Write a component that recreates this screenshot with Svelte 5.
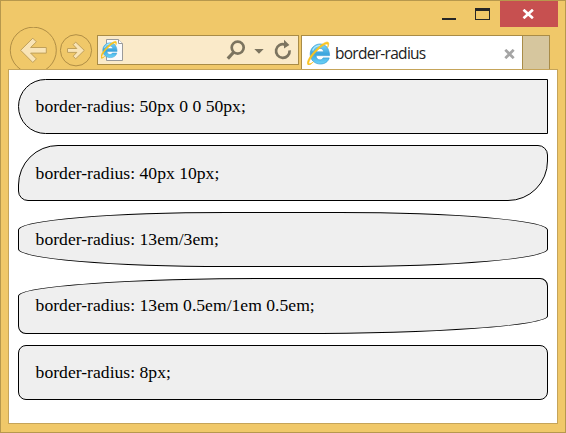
<script>
  const samples = [
    { text: '50px 0 0 50px', kind: 'left' },
    { text: '40px 10px', kind: 'diagonal' },
    { text: '13em/3em', kind: 'ellipse' },
    { text: '13em 0.5em/1em 0.5em', kind: 'mixed' },
    { text: '8px', kind: 'even' }
  ];
</script>

{#snippet explorer()}
  <g fill="none">
    <path d="M22.6 14.6C22.3 7.4 18.8 3 13.2 3C7.6 3 3.2 7.4 3.2 13C3.2 18.8 7.5 23 13.3 23C17.8 23 21.1 20.8 22.2 16.9H16.1C15.4 18.2 14.4 18.9 13 18.9C10.7 18.9 9.2 17.2 9 14.6Z" fill="url(#blue)" stroke="#3b9ed4" stroke-width=".7" />
    <path d="M9.1 10.8C9.5 8.6 10.9 7.4 13 7.4C15 7.4 16.3 8.6 16.6 10.8Z" fill="#fff" stroke="#3b9ed4" stroke-width=".6" />
    <path d="M5.6 9.6C7 6.2 9.4 4.7 13 4.5" stroke="#b7edff" stroke-width="1.2" />
    <path d="M5.2 15.6C2.2 19.4 1 22.6 2.4 22.8C3.4 22.9 5 22 6.4 20.8C3.6 24 1.2 24.8.6 23.2C-.4 20.6 2.6 15.3 7.6 10C12.6 4.7 17.6 1 20.2 1C22.3 1 22.2 3.6 20.6 6.6C21.3 4.2 21 3 19.5 3.1C16.5 3.3 9.6 9.7 5.2 15.6Z" fill="#fbc71e" stroke="#f6bd23" stroke-width=".6" />
  </g>
{/snippet}

<div class="window">
  <div class="titlebar">
    <svg class="controls" width="60" height="27" viewBox="0 0 60 27">
      <path d="M2 18h14v2H2z" fill="#262626" />
      <path d="M35 8h15v12H35zM36 11v8h13v-8z" fill="#262626" fill-rule="evenodd" />
    </svg>
    <div class="close">
      <svg width="12" height="10" viewBox="0 0 12 10"><path d="M1.5.7l9.4 8.6M10.9.7l-9.4 8.6" stroke="#fff" stroke-width="2.6" /></svg>
    </div>
  </div>

  <div class="toolbar">
    <svg class="history" width="88" height="42" viewBox="0 0 88 42">
      <g fill="none" stroke="#b08e45">
        <circle cx="25.3" cy="23.2" r="23" />
        <circle cx="68" cy="23.3" r="15.6" />
      </g>
      <path d="M12.6 23.3L24.8 11.2L28.4 14.8L22.6 20.5H38.3V26.1H22.6L28.4 31.9L24.8 35.5Z" fill="#f9e4b6" stroke="#c0a05a" />
      <path d="M59.5 21.5h9.3l-3.7-3.8l2.6-2.6L76.3 23.4L67.7 31.8l-2.6-2.6l3.7-3.8h-9.3z" fill="#f9e4b6" stroke="#c0a05a" />
    </svg>
    <div class="address">
      <svg class="page" width="23" height="24" viewBox="0 0 23 24">
        <defs>
          <linearGradient id="blue" x2="0" y2="1">
            <stop stop-color="#7fd6f6" /><stop offset=".5" stop-color="#3ba5de" /><stop offset="1" stop-color="#6bd3f8" />
          </linearGradient>
        </defs>
        <path d="M5.5 2.5h12l4 4v17h-16z" fill="#fafafa" stroke="#9a9a9a" />
        <path d="M17.5 2.5v4h4" fill="#fff" stroke="#999" />
        <g transform="translate(-.6 3.6) scale(.74)">{@render explorer()}</g>
      </svg>
      <svg class="tools" width="70" height="28" viewBox="0 0 70 28">
        <g fill="none" stroke="#7c745f">
          <circle cx="15.7" cy="11.6" r="6" stroke-width="2.7" />
          <path d="M11.6 16.2L5.8 22.6" stroke-width="3.2" />
          <path d="M67.6 14.4A6.8 6.8 0 1 1 63 8.6" stroke-width="2.7" />
        </g>
        <path d="M32.3 13h9.4l-4.7 4.7zM62 3.8v8.7l5.4-3.4z" fill="#7c745f" />
      </svg>
    </div>
    <div class="tab">
      <svg class="logo" width="24" height="24" viewBox="0 0 24 24">{@render explorer()}</svg>
      <span>border-radius</span>
      <svg class="dismiss" width="11" height="10" viewBox="0 0 11 10"><path d="M1.3.8l8.4 8.4M9.7.8L1.3 9.2" stroke="#a5a5a5" stroke-width="2.7" /></svg>
    </div>
    <div class="new-tab"></div>
  </div>

  <main>
    {#each samples as sample}
      <div class="sample {sample.kind}">border-radius: {sample.text};</div>
    {/each}
  </main>
</div>

<style>
  .window {
    box-sizing: border-box;
    width: 566px;
    height: 433px;
    padding: 0 7px 8px;
    border: 1px solid #b7984d;
    background: #f0c869;
    display: flex;
    flex-direction: column;
  }
  .titlebar {
    height: 26px;
    flex: none;
    display: flex;
    justify-content: flex-end;
  }
  .controls {
    margin: -1px 0 0;
  }
  .close {
    width: 58px;
    height: 26px;
    background: #c75050;
    display: flex;
    align-items: center;
    justify-content: center;
  }
  .close svg {
    margin-right: 2px;
  }
  .toolbar {
    height: 42px;
    flex: none;
    display: flex;
    align-items: flex-start;
  }
  .history {
    flex: none;
    margin-right: 1px;
  }
  .address {
    box-sizing: border-box;
    width: 202px;
    height: 30px;
    margin-top: 8px;
    border: 1px solid #a98c47;
    background: #faeac9;
    display: flex;
    justify-content: space-between;
  }
  .page {
    margin: 1px 0 0 3px;
  }
  .tools {
    margin-right: 6px;
  }
  .tab {
    box-sizing: border-box;
    width: 221px;
    height: 34px;
    margin: 8px 0 0 2px;
    border: 1px solid #a98c47;
    border-right: 0;
    border-bottom: 0;
    background: #fff;
    display: flex;
    align-items: center;
  }
  .logo {
    margin: 1px 4px 0 5px;
  }
  .tab span {
    font: 15.5px/22px "Open Sans", "Noto Sans", sans-serif;
    letter-spacing: -0.72px;
    color: #222;
    padding-top: 1px;
  }
  .dismiss {
    margin: 2px 7px 0 auto;
  }
  .new-tab {
    box-sizing: border-box;
    width: 28px;
    height: 34px;
    margin-top: 8px;
    border: 1px solid #a98c47;
    border-bottom: 0;
    background: #d6c69e;
  }
  main {
    box-sizing: border-box;
    flex: 1;
    border: 1px solid #c5a45a;
    background: #fff;
    padding: 9px;
    display: flex;
    flex-direction: column;
    gap: 11px;
  }
  .sample {
    box-sizing: border-box;
    flex: none;
    height: 55px;
    padding: 0 16.6px;
    border: 1px solid #000;
    background: #efefef;
    color: #000;
    font: 17.6px/53px "Liberation Serif", "Times New Roman", serif;
    letter-spacing: 0.015px;
  }
  .left {
    border-radius: 50px 0 0 50px;
  }
  .diagonal {
    height: 56px;
    line-height: 55px;
    border-radius: 40px 10px;
  }
  .ellipse {
    border-radius: 208px / 18px;
  }
  .mixed {
    height: 56px;
    border-radius: 250px 8px / 18px 8px;
  }
  .even {
    border-radius: 8px;
  }
</style>
